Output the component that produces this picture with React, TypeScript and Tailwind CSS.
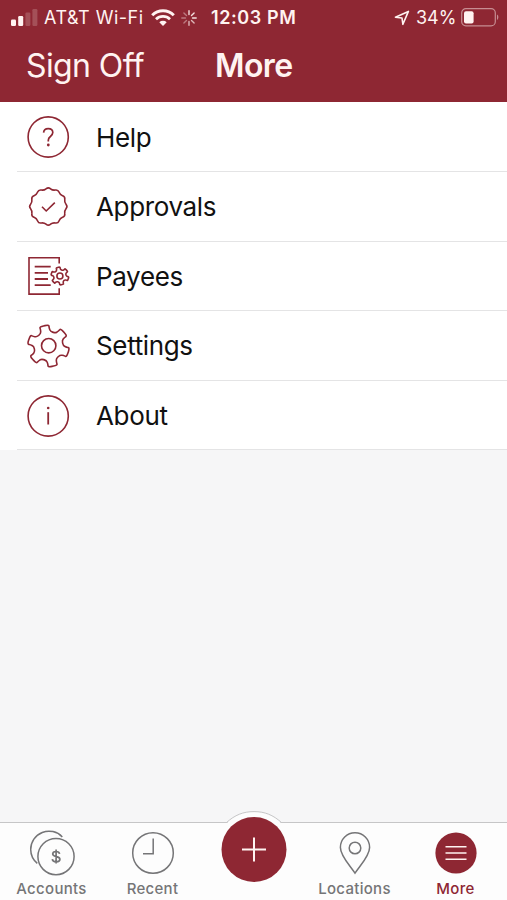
import type { ReactNode } from 'react'

type Point = [number, number]

function polar(cx: number, cy: number, r: number, deg: number): Point {
  const a = (deg * Math.PI) / 180
  return [cx + r * Math.cos(a), cy + r * Math.sin(a)]
}

// Closed outline with every corner softened
function roundedPath(points: Point[], t = 0.4) {
  const mix = (a: Point, b: Point) =>
    `${(a[0] + (b[0] - a[0]) * t).toFixed(2)} ${(a[1] + (b[1] - a[1]) * t).toFixed(2)}`
  return (
    points
      .map((p, i) => {
        const prev = points[(i + points.length - 1) % points.length]
        const next = points[(i + 1) % points.length]
        return `${i === 0 ? 'M' : 'L'}${mix(p, prev)} Q${p[0].toFixed(2)} ${p[1].toFixed(2)} ${mix(p, next)}`
      })
      .join(' ') + 'Z'
  )
}

function gearPath(cx: number, cy: number, r: number) {
  const points: Point[] = []
  for (let i = 0; i < 6; i++) {
    const a = -102 + i * 60
    points.push(polar(cx, cy, r * 0.72, a - 20))
    points.push(polar(cx, cy, r * 0.88, a - 14))
    points.push(polar(cx, cy, r * 1.04, a - 13))
    points.push(polar(cx, cy, r * 1.04, a + 13))
    points.push(polar(cx, cy, r * 0.88, a + 14))
    points.push(polar(cx, cy, r * 0.72, a + 20))
  }
  return roundedPath(points, 0.42)
}

function badgePath(cx: number, cy: number) {
  const points: Point[] = []
  for (let i = 0; i < 24; i++) {
    points.push(polar(cx, cy, i % 2 === 0 ? 19.5 : 16.6, -90 + i * 15))
  }
  return roundedPath(points, 0.48)
}

function Icon({ children }: { children: ReactNode }) {
  return (
    <svg
      viewBox="0 0 44 44"
      className="h-11 w-11 shrink-0"
      fill="none"
      stroke="currentColor"
      strokeWidth="1.6"
    >
      {children}
    </svg>
  )
}

const menu = [
  {
    label: 'Help',
    icon: (
      <Icon>
        <circle cx="22.2" cy="22" r="20.1" />
        <path d="M17.6 17.6c.2-2.4 2-3.9 4.6-3.9 2.7 0 4.6 1.5 4.6 3.9 0 1.9-1 2.8-2.4 3.9-1.5 1.1-2.1 2-2.1 3.7v1.2" strokeWidth="1.7" />
        <circle cx="22.3" cy="30" r="1.4" fill="currentColor" stroke="none" />
      </Icon>
    )
  },
  {
    label: 'Approvals',
    icon: (
      <Icon>
        <path d={badgePath(22.3, 21.5)} />
        <path d="M16 21.8l4.2 4.2 8.6-8.4" />
      </Icon>
    )
  },
  {
    label: 'Payees',
    icon: (
      <Icon>
        <path d="M33.2 9.4V3.7H3v36.4h30.2v-5.8" />
        <path d="M8.7 12.6h16M8.7 18.9H22M8.7 25H22M8.7 31.2h16" strokeWidth="1.8" />
        <path d={gearPath(33.9, 22, 8.7)} />
        <circle cx="33.9" cy="22" r="3" />
      </Icon>
    )
  },
  {
    label: 'Settings',
    icon: (
      <Icon>
        <path d={gearPath(22.5, 22, 20.4)} />
        <circle cx="22.7" cy="21.7" r="7.2" />
      </Icon>
    )
  },
  {
    label: 'About',
    icon: (
      <Icon>
        <circle cx="22.2" cy="22" r="20.1" />
        <path d="M22.2 18.2v12.3" strokeWidth="1.8" />
        <circle cx="22.2" cy="14" r="1.3" fill="currentColor" stroke="none" />
      </Icon>
    )
  }
]

function StatusBar() {
  return (
    <div className="flex h-[34px] items-center pl-[11px] pr-[8px] pt-px text-[18px] leading-none">
      <svg viewBox="0 0 27 17" className="h-[17px] w-[27px]" fill="currentColor">
        <rect x="0" y="10.5" width="5" height="6.5" rx="1.2" />
        <rect x="7.2" y="7" width="5" height="10" rx="1.2" />
        <rect x="14.4" y="3.5" width="5" height="13.5" rx="1.2" opacity="0.2" />
        <rect x="21.4" y="0" width="5" height="17" rx="1.2" opacity="0.2" />
      </svg>
      <span className="ml-[6px] w-[100px] whitespace-nowrap tracking-[0.5px]">AT&amp;T Wi-Fi</span>
      <svg viewBox="0 0 24 17" className="ml-[7px] h-[17px] w-[24px]" fill="none" stroke="currentColor">
        <path d="M1.2 6.2a15.4 15.4 0 0 1 21.6 0" strokeWidth="3" />
        <path d="M5 10.3a10 10 0 0 1 14 0" strokeWidth="2.8" />
        <path d="M12 17l-3.7-3.8a5.4 5.4 0 0 1 7.4 0z" fill="currentColor" stroke="none" />
      </svg>
      <svg
        viewBox="0 0 16 16"
        className="ml-[6px] h-4 w-4"
        stroke="currentColor"
        strokeWidth="1.4"
        strokeLinecap="round"
      >
        <path d="M8 .8v3.7M13.1 2.9l-2.6 2.6M15.2 8h-3.7" opacity="0.9" />
        <path d="M13.1 13.1l-2.6-2.6M8 15.2v-3.7" opacity="0.7" />
        <path d="M2.9 13.1l2.6-2.6M.8 8h3.7M2.9 2.9l2.6 2.6" opacity="0.4" />
      </svg>
      <span className="ml-[14px] whitespace-nowrap font-semibold tracking-[0.6px]">12:03 PM</span>
      <svg
        viewBox="0 0 16 16"
        className="ml-auto h-4 w-4"
        fill="none"
        stroke="currentColor"
        strokeWidth="1.6"
        strokeLinejoin="round"
      >
        <path d="M1.4 7.2L14.4 1.4 8.9 14.3 8 8z" />
      </svg>
      <span className="ml-[6px] w-[41px] whitespace-nowrap">34%</span>
      <svg viewBox="0 0 38 19" className="ml-[4px] h-[19px] w-[38px]" fill="none">
        <rect x="0.7" y="0.7" width="33.6" height="17.2" rx="4.2" stroke="currentColor" strokeWidth="1.2" opacity="0.5" />
        <rect x="3" y="3.2" width="9.6" height="12.2" rx="2" fill="currentColor" />
        <path d="M36 6.6c1.8.8 1.8 4.6 0 5.4z" fill="currentColor" opacity="0.5" />
      </svg>
    </div>
  )
}

function Tab({ label, icon, active = false }: { label: string; icon: ReactNode; active?: boolean }) {
  return (
    <div
      className={`flex w-[101px] flex-col items-center pt-[7px] ${active ? 'text-[#8e2733]' : 'text-[#757577]'}`}
    >
      {icon}
      <span className="mt-[2px] text-[15px] font-medium leading-[18px] tracking-[0.3px]">{label}</span>
    </div>
  )
}

export default function App() {
  return (
    <div className="flex h-[900px] w-[507px] flex-col overflow-hidden bg-[#f6f6f7] font-['Inter',sans-serif]">
      <header className="h-[102.4px] shrink-0 bg-[#8e2733] text-[#fff3f1]">
        <StatusBar />
        <div className="flex h-[64px] items-center pl-[26px] text-[32px] leading-none">
          <span className="w-[189px] whitespace-nowrap tracking-[-0.6px]">Sign Off</span>
          <span className="font-semibold tracking-[-0.6px]">More</span>
        </div>
      </header>

      <ul className="shrink-0 bg-white text-[#8e2733]">
        {menu.map((item) => (
          <li key={item.label} className="flex h-[69.6px] pl-[17px]">
            <div className="flex flex-1 items-center border-b border-[#e4e4e5] pl-[9px] pt-px">
              {item.icon}
              <span className="ml-[26px] pt-px text-[26px] leading-none tracking-[-0.35px] text-[#111]">
                {item.label}
              </span>
            </div>
          </li>
        ))}
      </ul>

      <nav className="relative mt-auto flex h-[78px] shrink-0 border-t border-[#c6c6c7] bg-[#fdfdfd] pl-px">
        <Tab
          label="Accounts"
          icon={
            <svg viewBox="0 0 46 48" className="h-[48px] w-[46px]" fill="none" stroke="currentColor" strokeWidth="1.5">
              <path d="M33.3 6.9A18.3 18.3 0 0 0 1.7 19.4 18.3 18.3 0 0 0 8.3 33.3" />
              <circle cx="27" cy="26.6" r="18.1" />
              <path
                d="M30.6 23.8c-.3-1.5-1.6-2.3-3.5-2.3s-3.4.9-3.4 2.5c0 3.5 7.2 1.6 7.2 5.2 0 1.7-1.5 2.6-3.7 2.6-2.3 0-3.7-.9-3.9-2.6M27.1 19.6v14"
                strokeWidth="1.7"
              />
            </svg>
          }
        />
        <Tab
          label="Recent"
          icon={
            <svg viewBox="0 0 44 48" className="h-[48px] w-[44px]" fill="none" stroke="currentColor" strokeWidth="1.5">
              <circle cx="22" cy="23" r="20.3" />
              <path d="M22.2 8.5v15.2H12" />
            </svg>
          }
        />
        <div className="w-[101px]" />
        <Tab
          label="Locations"
          icon={
            <svg viewBox="0 0 44 48" className="h-[48px] w-[44px]" fill="none" stroke="currentColor" strokeWidth="1.5">
              <path d="M22 43.2C17 35.4 7.4 26 7.4 17.4a14.6 14.6 0 0 1 29.2 0C36.6 26 27 35.4 22 43.2z" />
              <circle cx="22" cy="18" r="5.8" />
            </svg>
          }
        />
        <Tab
          label="More"
          active
          icon={
            <svg viewBox="0 0 44 48" className="h-[48px] w-[44px]" fill="none">
              <circle cx="22" cy="23" r="20.6" fill="currentColor" />
              <path d="M11.5 16.7h21M11.5 23h21M11.5 29.3h21" stroke="#fff3f1" strokeWidth="1.6" />
            </svg>
          }
        />

        {/* Raised add button, its rim rises above the bar */}
        <svg viewBox="0 0 78 90" className="absolute -top-[13px] left-[215px] h-[90px] w-[78px]" fill="none">
          <path d="M12.5 12.5C20 5 28 1.6 39 1.6S58 5 65.500 12.5V14.5H78V90H0V14.5h12.5z" fill="#fdfdfd" />
          <path d="M11.5 12.5C20 5 28 1.6 39 1.6S58 5 66.5 12.5" stroke="#c6c6c7" />
          <circle cx="39" cy="39.5" r="32.5" fill="#8e2733" />
          <path d="M27 39.5h24M39 27.5v24" stroke="#fff3f1" strokeWidth="2" />
        </svg>
      </nav>
    </div>
  )
}
